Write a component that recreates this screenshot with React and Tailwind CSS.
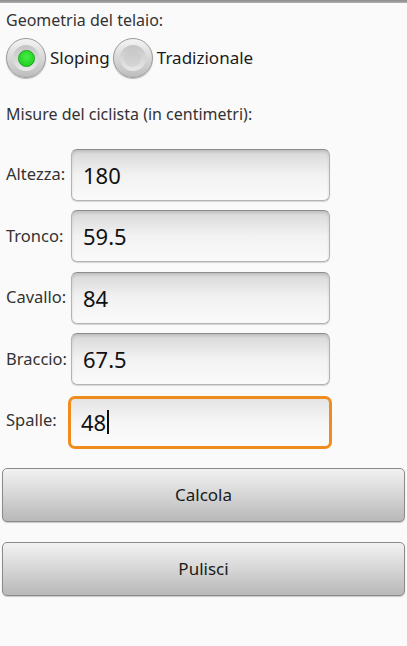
import React from 'react';

const font = { fontFamily: '"Noto Sans", "Open Sans", sans-serif' };

const fields = [
  { label: 'Altezza:', value: '180' },
  { label: 'Tronco:', value: '59.5' },
  { label: 'Cavallo:', value: '84' },
  { label: 'Braccio:', value: '67.5' },
  { label: 'Spalle:', value: '48', focused: true },
];

function Radio({ checked, label }) {
  return (
    <div className="flex items-center">
      <div className="flex h-10 w-10 items-center justify-center rounded-full border border-[#9a9a9a] bg-gradient-to-b from-[#f4f4f4] to-[#bdbdbd] shadow-[0_1px_1px_rgba(0,0,0,0.25)]">
        <div className="flex h-[26px] w-[26px] items-center justify-center rounded-full bg-gradient-to-b from-[#c4c4c4] to-[#e8e8e8]">
          {checked ? (
            <div className="h-[17px] w-[17px] rounded-full border border-[#13a813] bg-[radial-gradient(circle_at_50%_40%,#44ee44,#1cc41c)]" />
          ) : (
            <div className="h-[17px] w-[17px] rounded-full bg-gradient-to-b from-[#c8c8c8] to-[#d6d6d6]" />
          )}
        </div>
      </div>
      <span className="ml-1 text-[17px] text-[#1a1a1a]">{label}</span>
    </div>
  );
}

function Field({ label, value, focused }) {
  return (
    <div className="flex h-[61.5px] items-center">
      <div className="w-[71px] pl-[6px] text-[16.5px] text-[#333]">{label}</div>
      <div
        className={
          focused
            ? 'mt-[3px] flex h-[53px] w-[264px] -ml-[3px] items-center rounded-[7px] border-[3px] border-[#f08c1e] bg-gradient-to-b from-[#e4e4e4] via-[#f6f6f6] to-[#fbfbfb] pl-[10px]'
            : 'flex h-[52px] w-[259px] items-center rounded-[6px] border border-[#b4b4b4] border-t-[#8c8c8c] bg-gradient-to-b from-[#d8d8d8] via-[#f2f2f2] to-[#fafafa] pl-[11px] shadow-[inset_0_2px_3px_rgba(0,0,0,0.12),0_1px_1px_rgba(0,0,0,0.15)]'
        }
      >
        <span className="text-[22px] leading-none text-[#111]">{value}</span>
        {focused && <span className="ml-[1px] h-[24px] w-[1.5px] bg-[#111]" />}
      </div>
    </div>
  );
}

function Button({ children }) {
  return (
    <button className="flex h-[54px] w-full items-center justify-center rounded-[5px] border border-[#8a8a8a] bg-gradient-to-b from-[#f2f2f2] via-[#d6d6d6] to-[#b8b8b8] text-[17px] text-[#1a1a1a] shadow-[0_1px_1px_rgba(0,0,0,0.2)]">
      {children}
    </button>
  );
}

export default function App() {
  return (
    <div className="h-[646px] w-[407px] overflow-hidden bg-[#fafafa]" style={font}>
      <div className="h-[3px] bg-gradient-to-b from-[#8a8a8a] to-[#b0b0b0]" />
      <div className="pl-[6px] pt-[6px] text-[16px] leading-[22px] text-[#333]">Geometria del telaio:</div>
      <div className="mt-[7px] flex items-center gap-[3px] pl-[6px]">
        <Radio checked label="Sloping" />
        <Radio label="Tradizionale" />
      </div>
      <div className="mt-[25px] pl-[6px] text-[16px] leading-[22px] text-[#333]">Misure del ciclista (in centimetri):</div>
      <div className="mt-[19px] flex flex-col">
        {fields.map((f) => (
          <Field key={f.label} {...f} />
        ))}
      </div>
      <div className="mt-[16px] flex flex-col gap-[20px] px-[2px]">
        <Button>Calcola</Button>
        <Button>Pulisci</Button>
      </div>
    </div>
  );
}
